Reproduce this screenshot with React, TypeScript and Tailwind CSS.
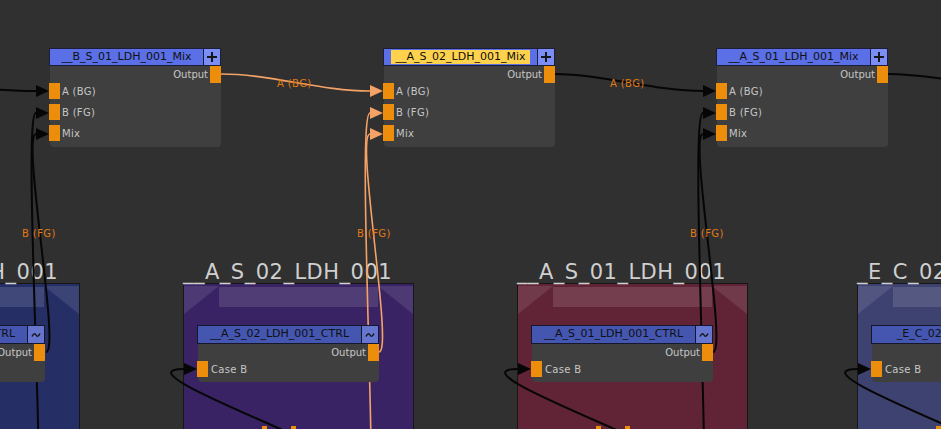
import React from "react";

type Pt = [number, number];

interface Wire {
  from: Pt;
  to: Pt;
  k: number;
  hot?: boolean;
  arrow?: boolean;
}

interface Group {
  left: number;
  name: string;
  ctrl: string;
  bg: string;
}

interface MixNode {
  left: number;
  title: string;
  selected?: boolean;
}

const groups: Group[] = [
  { left: -151, name: "__B_S_01_LDH_001", ctrl: "__B_S_01_LDH_001_CTRL", bg: "bg-[#252f66]" },
  { left: 183, name: "__A_S_02_LDH_001", ctrl: "__A_S_02_LDH_001_CTRL", bg: "bg-[#392364]" },
  { left: 517, name: "__A_S_01_LDH_001", ctrl: "__A_S_01_LDH_001_CTRL", bg: "bg-[#612437]" },
  { left: 857, name: "_E_C_02H_001", ctrl: "_E_C_02H_001_CTRL", bg: "bg-[#3e4271]" },
];

const mixNodes: MixNode[] = [
  { left: 49, title: "__B_S_01_LDH_001_Mix" },
  { left: 383, title: "__A_S_02_LDH_001_Mix", selected: true },
  { left: 716, title: "__A_S_01_LDH_001_Mix" },
];

const wires: Wire[] = [
  { from: [-60, 87], to: [36, 91], k: 40, arrow: true },
  { from: [35, 560], to: [36, 113], k: 15, arrow: true },
  { from: [46, 352], to: [36, 134], k: 15, arrow: true },
  { from: [221, 74], to: [370, 91], k: 50, hot: true, arrow: true },
  { from: [367, 560], to: [370, 113], k: 15, hot: true, arrow: true },
  { from: [379, 352], to: [370, 134], k: 15, hot: true, arrow: true },
  { from: [554, 74], to: [703, 91], k: 50, arrow: true },
  { from: [700, 560], to: [703, 113], k: 15, arrow: true },
  { from: [713, 352], to: [703, 134], k: 15, arrow: true },
  { from: [888, 74], to: [1000, 84], k: 40 },
  // loop wires feeding each group's Case B from a node further down
  ...groups.map<Wire>((g) => ({ from: [g.left + 162, 475], to: [g.left + 1, 369], k: 80, arrow: true })),
];

const edgeLabels = [
  { text: "A (BG)", left: 277, top: 78 },
  { text: "A (BG)", left: 610, top: 78 },
  { text: "B (FG)", left: 22, top: 228 },
  { text: "B (FG)", left: 357, top: 228 },
  { text: "B (FG)", left: 690, top: 228 },
];

const BLACK = "#060606";
const SALMON = "#f5a266";

const wirePath = (from: Pt, to: Pt, k: number) =>
  `M ${from[0]} ${from[1]} C ${from[0] + k} ${from[1]}, ${to[0] - k} ${to[1]}, ${to[0]} ${to[1]}`;

const arrowPoints = ([x, y]: Pt) => `${x},${y - 6} ${x + 13},${y} ${x},${y + 6}`;

function Port({ tall }: { tall?: boolean }) {
  return <div className={`${tall ? "h-[17px]" : "h-[16px]"} w-[11px] shrink-0 bg-[#ec8e0c]`} />;
}

function PlusGlyph() {
  return (
    <svg width="10" height="10" viewBox="0 0 10 10">
      <rect x="4" y="0" width="2" height="10" fill="#161616" />
      <rect x="0" y="4" width="10" height="2" fill="#161616" />
    </svg>
  );
}

function TildeGlyph() {
  return (
    <svg width="10" height="6" viewBox="0 0 10 6">
      <path d="M1 4.5 C2.5 1.2 4 1.2 5 3 S7.5 4.8 9 1.5" stroke="#141414" strokeWidth="1.4" fill="none" />
    </svg>
  );
}

function CtrlNode({ title }: { title: string }) {
  return (
    <div className="relative z-20 w-[182px]">
      <div className="flex h-[19px] border border-[#15172e] bg-[#4456b0]">
        <div className="flex flex-1 items-center justify-center whitespace-nowrap text-[11px] text-[#101010]">{title}</div>
        <div className="flex w-[17px] items-center justify-center border-l border-[#15172e] bg-[#6676cf]">
          <TildeGlyph />
        </div>
      </div>
      <div className="ml-[1px] h-[38px] rounded-b-[4px] bg-[#3f3f3f] text-[10px] text-[#c6c6c6]">
        <div className="flex h-[17px] items-center justify-end">
          <span className="mr-[2px]">Output</span>
          <Port tall />
        </div>
        <div className="-ml-[1px] flex h-[16px] items-center">
          <Port />
          <span className="ml-[3px] tracking-[0.3px]">Case B</span>
        </div>
      </div>
    </div>
  );
}

function GroupBox({ g }: { g: Group }) {
  return (
    <div className="absolute top-[262px] w-[231px]" style={{ left: g.left }}>
      <div className="h-[21px] whitespace-nowrap text-[21px] leading-[21px] tracking-[0.5px] text-[#cfcfcf]">{g.name}</div>
      <div className={`h-[170px] border border-[#161616] ${g.bg}`}>
        <div className="flex items-start pt-[2px]">
          <div className="h-[28px] w-[35px] bg-white/[0.1] [clip-path:polygon(0_0,100%_0,0_100%)]" />
          <div className="mt-[1px] h-[20px] flex-1 bg-white/[0.12]" />
          <div className="h-[28px] w-[35px] bg-white/[0.1] [clip-path:polygon(0_0,100%_0,100%_100%)]" />
        </div>
        <div className="ml-[13px] mt-[11px]">
          <CtrlNode title={g.ctrl} />
        </div>
      </div>
    </div>
  );
}

function MixNodeBox({ node }: { node: MixNode }) {
  return (
    <div className="absolute top-[48px] z-20 w-[172px]" style={{ left: node.left }}>
      <div className="flex h-[18px] border border-[#1b1d3a] bg-[#5b6fe6]">
        <div className="flex flex-1 items-center justify-center whitespace-nowrap text-[11px] text-[#101010]">
          <span className={node.selected ? "bg-[#ffd24d] px-[5px] leading-[14px]" : ""}>{node.title}</span>
        </div>
        <div className="flex w-[17px] items-center justify-center border-l border-[#1b1d3a] bg-[#7b8ef5]">
          <PlusGlyph />
        </div>
      </div>
      <div className="ml-[1px] flex h-[81px] flex-col rounded-b-[4px] bg-[#3f3f3f] text-[10px] text-[#c6c6c6]">
        <div className="flex h-[17px] items-center justify-end">
          <span className="mr-[2px]">Output</span>
          <Port tall />
        </div>
        <div className="-ml-[1px] flex flex-col gap-[5px]">
          {["A (BG)", "B (FG)", "Mix"].map((label) => (
            <div key={label} className="flex h-[16px] items-center">
              <Port />
              <span className="ml-[2px] tracking-[0.3px]">{label}</span>
            </div>
          ))}
        </div>
      </div>
    </div>
  );
}

export default function App() {
  return (
    <div className="relative h-[429px] w-[941px] overflow-hidden bg-[#303030] font-['DejaVu_Sans',sans-serif]">
      {groups.map((g) => (
        <GroupBox key={g.name} g={g} />
      ))}

      <svg className="absolute left-0 top-0 z-10" width="941" height="429">
        {wires.map((w, i) => (
          <path
            key={`w-${i}`}
            d={wirePath(w.from, w.to, w.k)}
            fill="none"
            stroke={w.hot ? SALMON : BLACK}
            strokeWidth={w.hot ? 1.6 : 2}
          />
        ))}
        {wires
          .filter((w) => w.arrow)
          .map((w, i) => (
            <polygon key={`a-${i}`} points={arrowPoints(w.to)} fill={w.hot ? SALMON : BLACK} />
          ))}
      </svg>

      {mixNodes.map((node) => (
        <MixNodeBox key={node.title} node={node} />
      ))}

      {groups.map((g) => (
        <React.Fragment key={`bits-${g.name}`}>
          <div className="absolute top-[426px] z-20 h-[3px] w-[5px] bg-[#ec8e0c]" style={{ left: g.left + 79 }} />
          <div className="absolute top-[426px] z-20 h-[3px] w-[5px] bg-[#ec8e0c]" style={{ left: g.left + 108 }} />
        </React.Fragment>
      ))}

      {edgeLabels.map((l) => (
        <div
          key={`${l.text}-${l.left}`}
          className="absolute z-30 whitespace-nowrap text-[10px] leading-[12px] tracking-[0.4px] text-[#e27a16]"
          style={{ left: l.left, top: l.top }}
        >
          {l.text}
        </div>
      ))}
    </div>
  );
}
